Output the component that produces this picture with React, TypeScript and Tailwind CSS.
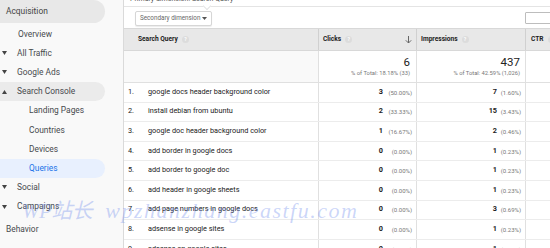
import { FC } from 'react'

const font = { fontFamily: 'Roboto, "Liberation Sans", sans-serif' }

const Caret: FC<{ up?: boolean }> = ({ up }) => (
  <svg width="5" height="4" viewBox="0 0 5 4" className="absolute left-[2px] top-1/2 -translate-y-1/2">
    {up ? <path d="M0 4 L2.5 0 L5 4 Z" fill="#444" /> : <path d="M0 0 L2.5 4 L5 0 Z" fill="#444" />}
  </svg>
)

const Help: FC = () => (
  <span className="ml-[4px] inline-flex h-[7px] w-[7px] items-center justify-center rounded-full bg-[#dcdcdc] text-[5px] leading-none text-white">
    ?
  </span>
)

type NavItem = { label: string; indent: number; caret?: 'down' | 'up'; pill?: 'gray' | 'blue' }

const nav: NavItem[] = [
  { label: 'Overview', indent: 18 },
  { label: 'All Traffic', indent: 17, caret: 'down' },
  { label: 'Google Ads', indent: 17, caret: 'down' },
  { label: 'Search Console', indent: 17, caret: 'up', pill: 'gray' },
  { label: 'Landing Pages', indent: 29 },
  { label: 'Countries', indent: 29 },
  { label: 'Devices', indent: 29 },
  { label: 'Queries', indent: 29, pill: 'blue' },
  { label: 'Social', indent: 17, caret: 'down' },
  { label: 'Campaigns', indent: 17, caret: 'down' },
]

const rows = [
  ['google docs header background color', '3', '(50.00%)', '7', '(1.60%)'],
  ['install debian from ubuntu', '2', '(33.33%)', '15', '(3.43%)'],
  ['google doc header background color', '1', '(16.67%)', '2', '(0.46%)'],
  ['add border in google docs', '0', '(0.00%)', '1', '(0.23%)'],
  ['add border to google doc', '0', '(0.00%)', '1', '(0.23%)'],
  ['add header in google sheets', '0', '(0.00%)', '1', '(0.23%)'],
  ['add page numbers in google docs', '0', '(0.00%)', '3', '(0.69%)'],
  ['adsense in google sites', '0', '(0.00%)', '1', '(0.23%)'],
  ['adsense on google sites', '0', '(0.00%)', '1', '(0.23%)'],
]

const Sidebar: FC = () => (
  <aside className="w-[105px] shrink-0 text-[8.4px] text-[#474a4e]">
    <div className="flex h-[23px] items-center rounded-r-full bg-[#e8e8e8] pl-[6px] text-[#444]">Acquisition</div>
    <div className="mt-[1.4px]">
      {nav.map((n) => (
        <div
          key={n.label}
          className={`relative flex h-[19.2px] items-center rounded-r-full ${
            n.pill === 'gray' ? 'bg-[#ebebeb]' : n.pill === 'blue' ? 'bg-[#e8f0fe] text-[#1a73e8]' : ''
          }`}
          style={{ paddingLeft: n.indent }}
        >
          {n.caret && <Caret up={n.caret === 'up'} />}
          {n.label}
        </div>
      ))}
    </div>
    <div className="flex h-[27px] items-center pl-[6px]">Behavior</div>
  </aside>
)

const Table: FC = () => (
  <div className="flex-1 overflow-hidden border-l border-[#dadada] bg-white">
    {/* toolbar */}
    <div className="relative h-[7px] border-b border-[#e4e4e4]">
      <span className="absolute left-[6px] top-[-6px] text-[7px] text-[#555]">Primary dimension: Search Query</span>
      <span className="absolute left-[80px] top-[3px] h-[6px] w-[6px] rotate-45 border-b border-r border-[#e4e4e4] bg-white" />
    </div>
    <div className="flex h-[21px] items-center justify-between">
      <div className="ml-[11px] mt-[2px] flex h-[15px] w-[77px] items-center justify-between rounded-[2px] border border-[#d6d6d6] bg-white px-[4px] text-[6.3px] text-[#666] shadow-[0_1px_1px_rgba(0,0,0,0.08)]">
        Secondary dimension
        <svg width="5" height="3" viewBox="0 0 5 3"><path d="M0 0 L2.5 3 L5 0 Z" fill="#555" /></svg>
      </div>
      <div className="mr-[-10px] h-[12px] w-[40px] rounded-[1px] border border-[#bdbdbd] bg-white" />
    </div>

    {/* header */}
    <div className="grid h-[23px] grid-cols-[195px_98px_109px_1fr] border-y border-[#d8d8d8] bg-[#e8e8e8] text-[6.6px] font-bold text-[#222]">
      <div className="flex items-center border-r border-[#d0d0d0] pl-[14px]">
        Search Query
        <Help />
      </div>
      <div className="flex items-center justify-between border-r border-[#d0d0d0] pl-[4px] pr-[4px]">
        <span className="flex items-center">
          Clicks
          <Help />
        </span>
        <svg width="7" height="8" viewBox="0 0 7 8">
          <path d="M3.5 0 V7 M0.8 4.3 L3.5 7 L6.2 4.3" stroke="#666" strokeWidth="1" fill="none" />
        </svg>
      </div>
      <div className="flex items-center border-r border-[#d0d0d0] pl-[4px]">
        Impressions
        <Help />
      </div>
      <div className="flex items-center pl-[5px]">
        CTR
        <Help />
      </div>
    </div>

    {/* totals */}
    <div className="grid h-[32px] grid-cols-[195px_98px_109px_1fr] border-b border-[#e0e0e0]">
      <div className="border-r border-[#e0e0e0] bg-[#f9f9f9]" />
      <div className="flex flex-col items-end justify-center border-r border-[#e0e0e0] pr-[6px]">
        <span className="text-[11.5px] leading-[13px] text-[#222]">6</span>
        <span className="text-[5.8px] leading-[8px] text-[#777]">% of Total: 18.18% (33)</span>
      </div>
      <div className="flex flex-col items-end justify-center border-r border-[#e0e0e0] pr-[5px]">
        <span className="text-[11.5px] leading-[13px] text-[#222]">437</span>
        <span className="text-[5.8px] leading-[8px] text-[#777]">% of Total: 42.59% (1,026)</span>
      </div>
      <div />
    </div>

    {/* rows */}
    {rows.map((r, i) => (
      <div key={i} className="grid h-[19.6px] grid-cols-[195px_98px_109px_1fr] border-b border-[#ececec] text-[7.3px] text-[#222]">
        <div className="flex items-center border-r border-[#e0e0e0]">
          <span className="w-[24px] pl-[4px]">{i + 1}.</span>
          <span>{r[0]}</span>
        </div>
        <div className="flex items-center justify-end border-r border-[#e0e0e0] pr-[4px]">
          <span className="font-bold">{r[1]}</span>
          <span className="w-[29px] text-right text-[6px] text-[#777]">{r[2]}</span>
        </div>
        <div className="flex items-center justify-end border-r border-[#e0e0e0] pr-[4px]">
          <span className="font-bold">{r[3]}</span>
          <span className="w-[24px] text-right text-[6px] text-[#777]">{r[4]}</span>
        </div>
        <div />
      </div>
    ))}
  </div>
)

const App: FC = () => (
  <div className="relative flex h-[248px] w-[550px] overflow-hidden bg-[#f9f9f9]" style={font}>
    <Sidebar />
    <div className="flex flex-1 pl-[18px]">
      <Table />
    </div>
    {/* watermark */}
    <div
      className="pointer-events-none absolute left-[22px] top-[200px] flex items-baseline whitespace-nowrap italic leading-none text-[#6a88ec]/35"
      style={{ fontFamily: '"Liberation Serif", "Noto Sans CJK SC", serif' }}
    >
      <span className="text-[21px] tracking-[-0.5px]">WP站长</span>
      <span className="ml-[13px] text-[22px] tracking-[1.5px]">wpzhanzhang.eastfu.com</span>
    </div>
  </div>
)

export default App
